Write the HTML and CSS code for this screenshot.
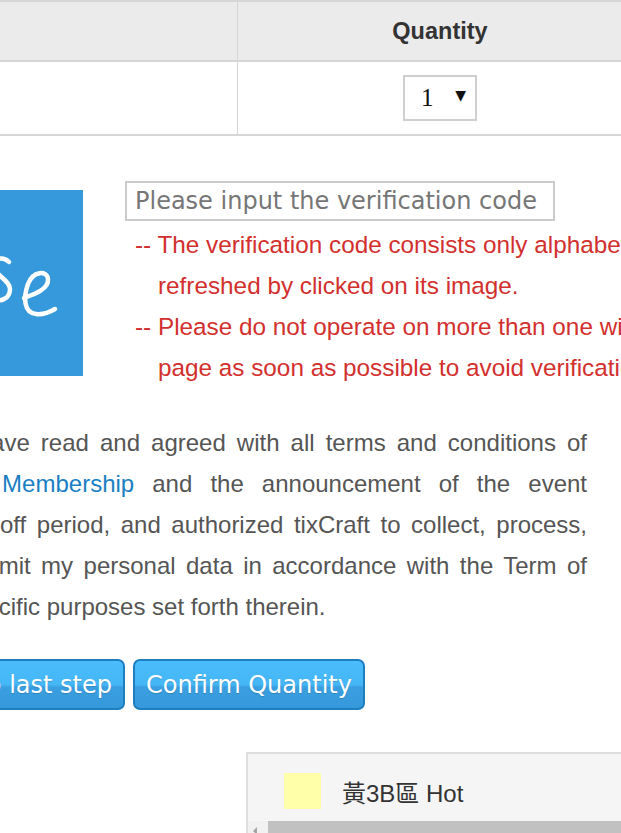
FILE: index.html
```html
<!DOCTYPE html>
<html lang="en">
<head>
    <meta charset="UTF-8">
    <meta name="viewport" content="width=device-width, initial-scale=1.0">
    <title>tixCraft - Ticket Quantity</title>
    <link rel="stylesheet" href="styles.css">
</head>
<body>
    <div class="page">
        <table class="ticket-table">
            <thead>
                <tr>
                    <th class="col-type"></th>
                    <th class="col-qty">Quantity</th>
                </tr>
            </thead>
            <tbody>
                <tr>
                    <td class="col-type"></td>
                    <td class="col-qty">
                        <div class="qty-select"><span>1</span><span class="caret">▼</span></div>
                    </td>
                </tr>
            </tbody>
        </table>

        <div class="captcha-row">
            <svg class="captcha-img" width="200" height="186" viewBox="0 0 200 186">
                <rect width="200" height="186" fill="#3599dc"/>
                <path d="M126 72 C120 66 111 68 111 76 C111 85 127 90 127 99 C127 109 117 113 109 108" fill="none" stroke="#fff" stroke-width="4.5" stroke-linecap="round"/>
                <path d="M141 108 C152 104 166 99 165 89 C164 80 150 81 145 94 C140 108 141 123 153 124 C161 125 167 122 172 119" fill="none" stroke="#fff" stroke-width="4.5" stroke-linecap="round" stroke-linejoin="round"/>
            </svg>
            <div class="captcha-info">
                <input type="text" class="captcha-input" placeholder="Please input the verification code">
                <ul class="notes">
                    <li>-- The verification code consists only alphabets and numbers, and can be<br>refreshed by clicked on its image.</li>
                    <li>-- Please do not operate on more than one window, and complete this<br>page as soon as possible to avoid verification code errors.</li>
                </ul>
            </div>
        </div>

        <p class="terms">
            <span class="ln">I have read and agreed with all terms and conditions of</span>
            <span class="ln">its <a href="#">Membership</a> and the announcement of the event</span>
            <span class="ln">cut-off period, and authorized tixCraft to collect, process,</span>
            <span class="ln">submit my personal data in accordance with the Term of</span>
            <span class="ln last">specific purposes set forth therein.</span>
        </p>

        <div class="actions">
            <button class="btn btn-back">Back to last step</button>
            <button class="btn">Confirm Quantity</button>
        </div>

        <div class="seat-panel">
            <div class="seat-item">
                <span class="swatch"></span>
                <span class="seat-name">黃3B區 Hot</span>
            </div>
            <div class="hscroll">
                <span class="arrow"></span>
                <span class="thumb"></span>
            </div>
        </div>
    </div>
</body>
</html>
```

FILE: styles.css
```css
body {
    margin: 0;
    overflow: hidden;
    background: #fff;
    font-family: "Liberation Sans", Arial, sans-serif;
}
.page {
    margin-left: -400px;
    width: 1400px;
}

/* ticket table */
.ticket-table {
    width: 1042px;
    border-collapse: collapse;
    margin-top: 0;
}
.ticket-table th, .ticket-table td {
    border-top: 2px solid #d6d6d6;
    border-bottom: 2px solid #d6d6d6;
    padding: 0;
    text-align: center;
}
.ticket-table .col-type {
    width: 637px;
    border-right: 1px solid #d6d6d6;
}
.ticket-table th {
    height: 58px;
    background: #ebebeb;
    color: #333;
    font-size: 23.5px;
    font-weight: bold;
}
.ticket-table td {
    height: 72px;
}
.qty-select {
    display: inline-flex;
    align-items: center;
    justify-content: space-between;
    box-sizing: border-box;
    width: 74px;
    height: 46px;
    padding: 0 9px 0 16px;
    border: 2px solid #cfcfcf;
    vertical-align: middle;
    font-family: "Liberation Serif", serif;
    font-size: 25px;
    color: #111;
}
.qty-select .caret {
    font-family: "DejaVu Sans", sans-serif;
    font-size: 14px;
    margin-top: -6px;
}

/* captcha */
.captcha-row {
    display: flex;
    align-items: flex-start;
    gap: 42px;
    padding-left: 283px;
    margin-top: 45px;
}
.captcha-img {
    flex: none;
    margin-top: 9px;
}
.captcha-info {
    width: 800px;
}
.captcha-input {
    display: block;
    box-sizing: border-box;
    width: 430px;
    height: 40px;
    margin: 0;
    padding: 0 8px;
    border: 2px solid #cbcbcb;
    font-family: "DejaVu Sans", Verdana, sans-serif;
    font-size: 24px;
    outline: none;
}
.captcha-input::placeholder {
    color: #767676;
}
.notes {
    list-style: none;
    margin: 3px 0 0 10px;
    padding: 0;
    color: #d2302e;
    font-size: 24.3px;
    line-height: 41px;
    white-space: nowrap;
}
.notes li {
    padding-left: 23px;
    text-indent: -23px;
}

/* terms */
.terms {
    margin: 34px 0 0 360px;
    width: 627px;
    color: #555;
    font-size: 24px;
    line-height: 41px;
}
.terms .ln {
    display: block;
    text-align: justify;
    text-align-last: justify;
}
.terms .ln.last {
    text-align-last: left;
}
.terms a {
    color: #1b7fc4;
    text-decoration: none;
}

/* buttons */
.actions {
    display: grid;
    grid-template-columns: 525px auto;
    column-gap: 8px;
    justify-content: start;
    margin-top: 32px;
}
.btn-back {
    justify-self: end;
}
.btn {
    height: 51px;
    padding: 0 11px;
    border: 2px solid #1e7fc0;
    border-radius: 7px;
    background: linear-gradient(#4abdfc 0%, #45b6f6 50%, #3a9fe0 56%, #3598da 100%);
    color: #fff;
    font-family: "DejaVu Sans", Verdana, sans-serif;
    font-size: 24px;
    text-shadow: 0 1px 1px rgba(0, 0, 0, 0.15);
    cursor: pointer;
}

/* seat area */
.seat-panel {
    margin: 42px 0 0 646px;
    width: 700px;
    border: 2px solid #dedede;
    border-bottom: none;
    background: #f5f5f5;
}
.seat-item {
    display: flex;
    align-items: center;
    gap: 21px;
    padding: 19px 0 12px 36px;
}
.swatch {
    width: 37px;
    height: 36px;
    background: #ffffaa;
}
.seat-name {
    color: #333;
    font-family: "Liberation Sans", "Noto Sans CJK TC", sans-serif;
    font-size: 24px;
}
.hscroll {
    display: flex;
    height: 17px;
    background: #f1f1f1;
}
.hscroll .arrow {
    width: 17px;
    position: relative;
}
.hscroll .arrow::after {
    content: "";
    position: absolute;
    left: 5px;
    top: 6px;
    border-style: solid;
    border-width: 4px 4px 4px 0;
    border-color: transparent #a3a3a3 transparent transparent;
}
.hscroll .thumb {
    flex: 1;
    margin-left: 3px;
    background: #c1c1c1;
}
```
